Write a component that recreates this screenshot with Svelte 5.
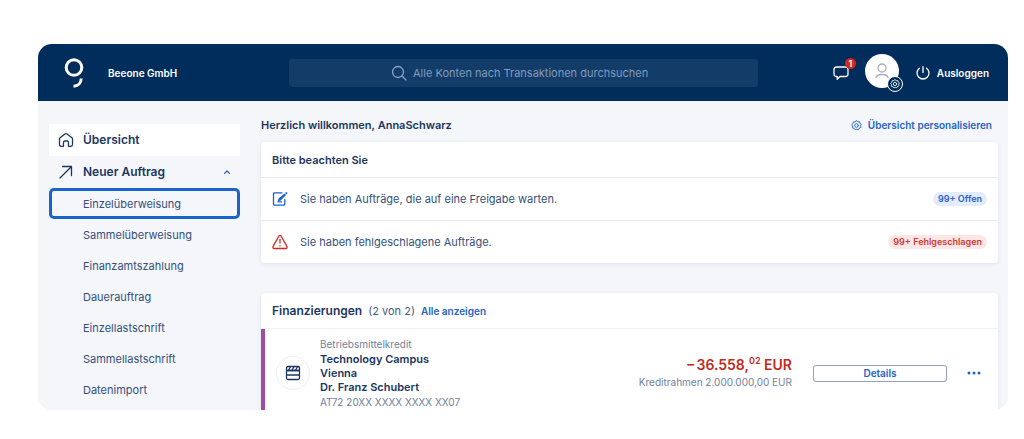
<script lang="ts">
  const orders = [
    'Einzelüberweisung',
    'Sammelüberweisung',
    'Finanzamtszahlung',
    'Dauerauftrag',
    'Einzellastschrift',
    'Sammellastschrift',
    'Datenimport',
  ];

  let query = $state('');
  let open = $state(true);
  let active = $state('Einzelüberweisung');
</script>

{#snippet gear(size: number)}
  <svg class="icon gear" width={size} height={size} viewBox="0 0 24 24" aria-hidden="true">
    <path
      d="M12 1.5 L14.8 4 L18.6 3.6 L19.4 7.2 L22.5 9.2 L21 12.5 L21.6 16.2 L18.2 17.6 L16.4 21 L12.8 20 L9.2 21.4 L7 18.2 L3.2 17.4 L3.6 13.6 L1.5 10.5 L4.3 7.9 L5 4.2 L8.8 4.2 Z"
    />
    <circle cx="12" cy="12" r="4" />
  </svg>
{/snippet}

<div class="frame">
  <header class="topbar">
    <div class="brand">
      <a class="logo" href="#start" aria-label="Startseite">
        <svg width="22" height="32" viewBox="0 0 22 32" aria-hidden="true">
          <circle cx="11" cy="10.5" r="7.8" />
          <path d="M18.2 21.5 C18.2 26 15 29.2 10.5 29.2" />
        </svg>
      </a>
      <span class="company">Beeone GmbH</span>
    </div>

    <label class="search">
      <svg class="icon" width="16" height="16" viewBox="0 0 16 16" aria-hidden="true">
        <circle cx="7" cy="7" r="5.5" />
        <path d="M11 11 L15 15" />
      </svg>
      <input
        type="text"
        aria-label="Suche"
        placeholder="Alle Konten nach Transaktionen durchsuchen"
        bind:value={query}
      />
    </label>

    <div class="tools">
      <button class="messages" type="button" aria-label="Nachrichten">
        <svg class="icon" width="16" height="16" viewBox="0 0 16 16" aria-hidden="true">
          <path d="M3.5 2 H12.5 Q15 2 15 4.5 V9 Q15 11.5 12.5 11.5 H7 L4.2 14.2 V11.5 H3.5 Q1 11.5 1 9 V4.5 Q1 2 3.5 2 Z" />
        </svg>
        <span class="count">1</span>
      </button>

      <button class="avatar" type="button" aria-label="Profil">
        <svg class="icon" width="14" height="16" viewBox="0 0 14 16" aria-hidden="true">
          <circle cx="7" cy="5" r="4" />
          <path d="M1 14.5 Q2 11.5 7 11.5 Q12 11.5 13 14.5" />
        </svg>
        <span class="settings">{@render gear(10)}</span>
      </button>

      <button class="logout" type="button">
        <svg class="icon" width="14" height="14" viewBox="0 0 14 14" aria-hidden="true">
          <path d="M7 0.7 V6.5 M3.4 2.2 A6 6 0 1 0 10.6 2.2" />
        </svg>
        Ausloggen
      </button>
    </div>
  </header>

  <div class="body">
    <nav class="sidebar" aria-label="Hauptnavigation">
      <a class="item main" class:current={true} href="#uebersicht">
        <svg class="icon" width="16" height="16" viewBox="0 0 16 16" aria-hidden="true">
          <path d="M1.5 7 Q1.5 6.3 2.1 5.8 L7 2 Q8 1.2 9 2 L13.9 5.8 Q14.5 6.3 14.5 7 V12.5 Q14.5 14.3 12.8 14.3 H10.5 V10.5 Q10.5 9 9 9 H7 Q5.5 9 5.5 10.5 V14.3 H3.2 Q1.5 14.3 1.5 12.5 Z" />
        </svg>
        Übersicht
      </a>
      <button class="item main" type="button" aria-expanded={open} onclick={() => (open = !open)}>
        <svg class="icon" width="16" height="16" viewBox="0 0 16 16" aria-hidden="true">
          <path d="M2 14 L13.3 2.7 M4.5 2.5 H13.5 V11.5" />
        </svg>
        Neuer Auftrag
        <svg class="icon chevron" class:closed={!open} width="6" height="6" viewBox="0 0 6 6" aria-hidden="true">
          <path d="M0.6 4.4 L3 2 L5.4 4.4" />
        </svg>
      </button>
      {#if open}
        {#each orders as order (order)}
          <a class="item sub" class:active={order === active} href="#{order}" onclick={() => (active = order)}>
            {order}
          </a>
        {/each}
      {/if}
    </nav>

    <main>
      <div class="intro">
        <h1>Herzlich willkommen, AnnaSchwarz</h1>
        <a class="personalise" href="#personalisieren">
          {@render gear(11)}
          Übersicht personalisieren
        </a>
      </div>

      <section class="card notices">
        <h2>Bitte beachten Sie</h2>
        <div class="notice">
          <svg class="icon blue" width="16" height="16" viewBox="0 0 16 16" aria-hidden="true">
            <path d="M10 1.8 H2.8 Q1.5 1.8 1.5 3 V13 Q1.5 14.2 2.8 14.2 H11.5 Q12.8 14.2 12.8 13 V8.5" />
            <path d="M6 10.8 H9.5" />
            <path class="solid" d="M5.5 10.5 L6.6 7.4 L12.4 2.4 L14 4 L8.6 9.4 Z M13 1.9 L14.3 0.9 L15.5 2.1 L14.5 3.4 Z" />
          </svg>
          <p>Sie haben Aufträge, die auf eine Freigabe warten.</p>
          <span class="pill">99+ Offen</span>
        </div>
        <div class="notice">
          <svg class="icon red" width="16" height="16" viewBox="0 0 16 16" aria-hidden="true">
            <path d="M6.8 2.2 Q8 0.5 9.2 2.2 L14.9 12.4 Q15.6 14.4 13.6 14.5 H2.4 Q0.4 14.4 1.1 12.4 Z M8 5.5 V9 M8 11.6 V11.8" />
          </svg>
          <p>Sie haben fehlgeschlagene Aufträge.</p>
          <span class="pill failed">99+ Fehlgeschlagen</span>
        </div>
      </section>

      <section class="card finance">
        <div class="card-head">
          <h2>Finanzierungen</h2>
          <span class="total">(2 von 2)</span>
          <a href="#finanzierungen">Alle anzeigen</a>
        </div>
        <article class="loan">
          <span class="round">
            <svg class="icon" width="16" height="16" viewBox="0 0 16 16" aria-hidden="true">
              <path d="M1.5 5.5 V3 Q1.5 1.5 3 1.5 H13 Q14.5 1.5 14.5 3 V5.5 Z M3.5 5 L5.5 2 M7 5 L9 2 M10.5 5 L12.5 2" />
              <rect x="1.5" y="5.5" width="13" height="4.5" rx="1" />
              <path d="M1.5 10 V13 Q1.5 14.5 3 14.5 H13 Q14.5 14.5 14.5 13 V10" />
            </svg>
          </span>
          <div class="info">
            <span class="note">Betriebsmittelkredit</span>
            <h3>Technology Campus<br />Vienna<br />Dr. Franz Schubert</h3>
            <span class="note">AT72 20XX XXXX XXXX XX07</span>
          </div>
          <div class="amount">
            <strong>−&#8202;36.558,<sup>02</sup> EUR</strong>
            <span class="note">Kreditrahmen 2.000.000,00 EUR</span>
          </div>
          <button class="details" type="button">Details</button>
          <button class="more" type="button" aria-label="Weitere Aktionen">
            <svg width="14" height="4" viewBox="0 0 14 4" aria-hidden="true">
              <circle cx="2" cy="2" r="1.5" />
              <circle cx="7" cy="2" r="1.5" />
              <circle cx="12" cy="2" r="1.5" />
            </svg>
          </button>
        </article>
      </section>
    </main>
  </div>
</div>

<style>
  :global(body) {
    background: #fff;
  }

  .frame {
    margin: 44px 16px 28px 38px;
    border-radius: 14px;
    overflow: hidden;
    background: #f4f6fa;
    color: #1c3661;
    font-family: Inter, 'Liberation Sans', sans-serif;
    font-size: 11px;
    line-height: 16px;
  }

  h1,
  h2,
  h3,
  p {
    margin: 0;
    font-size: 11px;
    font-weight: 600;
  }

  a {
    color: #2563c9;
    text-decoration: none;
  }

  button {
    padding: 0;
    border: 0;
    background: none;
    color: inherit;
    font: inherit;
    cursor: pointer;
  }

  svg {
    display: block;
    flex: none;
  }

  .icon {
    fill: none;
    stroke: currentColor;
    stroke-width: 1.3;
    stroke-linecap: round;
    stroke-linejoin: round;
  }

  .gear {
    stroke-width: 2;
  }

  .topbar {
    display: grid;
    grid-template-columns: 1fr minmax(0, 469px) 1fr;
    align-items: center;
    height: 57px;
    padding: 0 19px;
    background: #002d5c;
    color: #fff;
  }

  .brand {
    display: flex;
    align-items: center;
    gap: 23px;
    padding-left: 6px;
  }

  .logo svg {
    fill: none;
    stroke: #fff;
    stroke-width: 3;
  }

  .company {
    font-size: 10px;
    font-weight: 600;
  }

  .search {
    display: flex;
    align-items: center;
    justify-content: center;
    gap: 6px;
    height: 28px;
    border-radius: 3px;
    background: #143c68;
    color: #8ba7c6;
  }

  .search input {
    width: 242px;
    padding: 0;
    border: 0;
    outline: 0;
    background: none;
    color: #fff;
    font: inherit;
  }

  .search input::placeholder {
    color: #7f9dbf;
    opacity: 1;
  }

  .tools {
    display: flex;
    align-items: center;
    justify-content: flex-end;
  }

  .messages,
  .avatar {
    position: relative;
  }

  .count {
    position: absolute;
    top: -7px;
    right: -7px;
    width: 11px;
    border-radius: 50%;
    background: #cf2a1e;
    font-size: 9px;
    font-weight: 600;
    line-height: 11px;
  }

  .avatar {
    display: grid;
    place-items: center;
    width: 34px;
    height: 34px;
    margin: 0 17px 4px 16px;
    border-radius: 50%;
    background: #fff;
    color: #a9aeb6;
  }

  .settings {
    position: absolute;
    right: -4px;
    bottom: -4px;
    display: grid;
    place-items: center;
    width: 14px;
    height: 14px;
    border: 1px solid #fff;
    border-radius: 50%;
    background: #002d5c;
    color: #fff;
  }

  .logout {
    display: flex;
    align-items: center;
    gap: 7px;
    font-size: 10px;
    font-weight: 600;
  }

  .body {
    display: flex;
    gap: 21px;
    padding: 0 10px 0 11px;
  }

  .sidebar {
    flex: none;
    width: 191px;
    padding: 23px 0 5px;
  }

  .item {
    display: flex;
    align-items: center;
    box-sizing: border-box;
    width: 100%;
    height: 31px;
    color: #35507b;
  }

  .main {
    gap: 9px;
    height: 32px;
    padding: 0 10px 0 9px;
    color: #1c3661;
    font-size: 12px;
    font-weight: 600;
  }

  .current {
    background: #fff;
  }

  .chevron {
    margin-left: auto;
    color: #2563c9;
  }

  .chevron.closed {
    transform: rotate(180deg);
  }

  .sub {
    padding-left: 34px;
  }

  .active {
    padding-left: 31px;
    border: 3px solid #1a62cc;
    border-radius: 5px;
  }

  main {
    flex: 1;
    min-width: 0;
  }

  .intro {
    display: flex;
    align-items: center;
    justify-content: space-between;
    padding: 16px 6px 9px 0;
  }

  .personalise {
    display: flex;
    align-items: center;
    gap: 6px;
    font-size: 10px;
    font-weight: 600;
  }

  .card {
    border-radius: 4px;
    background: #fff;
    box-shadow: 0 1px 4px rgba(28, 54, 97, 0.1);
  }

  .notices {
    margin-bottom: 30px;
  }

  .notices h2 {
    padding: 10px 11px 9px;
  }

  .notice {
    display: flex;
    align-items: center;
    gap: 12px;
    height: 42px;
    padding: 0 11px;
    border-top: 1px solid #e8ecf1;
  }

  .notice p {
    flex: 1;
    color: #35507b;
    font-weight: 400;
  }

  .blue {
    color: #1a62cc;
  }

  .red {
    color: #cf2a1e;
  }

  .solid {
    fill: currentColor;
    stroke: none;
  }

  .pill {
    padding: 0 5px;
    border-radius: 7px;
    background: #e3ecfc;
    color: #2a5fcb;
    font-size: 9px;
    font-weight: 600;
    line-height: 14px;
  }

  .pill.failed {
    background: #fde6e4;
    color: #cf3a36;
  }

  .finance {
    border-radius: 4px 4px 0 0;
  }

  .card-head {
    display: flex;
    align-items: baseline;
    gap: 6px;
    padding: 10px 11px 9px;
    border-bottom: 1px solid #eef1f5;
  }

  .card-head h2 {
    font-size: 12px;
  }

  .card-head a {
    font-size: 10px;
    font-weight: 600;
  }

  .total {
    color: #45597d;
  }

  .loan {
    display: flex;
    align-items: center;
    padding: 7px 17px 0 11px;
    border-left: 4px solid #a14ba5;
  }

  .round {
    display: grid;
    place-items: center;
    width: 32px;
    height: 32px;
    border: 1px solid #eceff3;
    border-radius: 50%;
  }

  .info {
    flex: 1;
    padding-left: 10px;
  }

  .info h3 {
    line-height: 14px;
  }

  .note {
    display: block;
    color: #70819d;
    font-size: 10px;
  }

  .amount {
    text-align: right;
  }

  .amount strong {
    color: #bf2b20;
    font-size: 14px;
    font-weight: 600;
  }

  .amount sup {
    font-size: 9px;
    line-height: 0;
  }

  .details {
    width: 134px;
    height: 17px;
    margin: 0 20px 0 21px;
    border: 1px solid #8fa3c0;
    border-radius: 3px;
    color: #2563c9;
    font-size: 10px;
    font-weight: 600;
    line-height: 14px;
  }

  .more svg {
    fill: #2563c9;
  }
</style>
